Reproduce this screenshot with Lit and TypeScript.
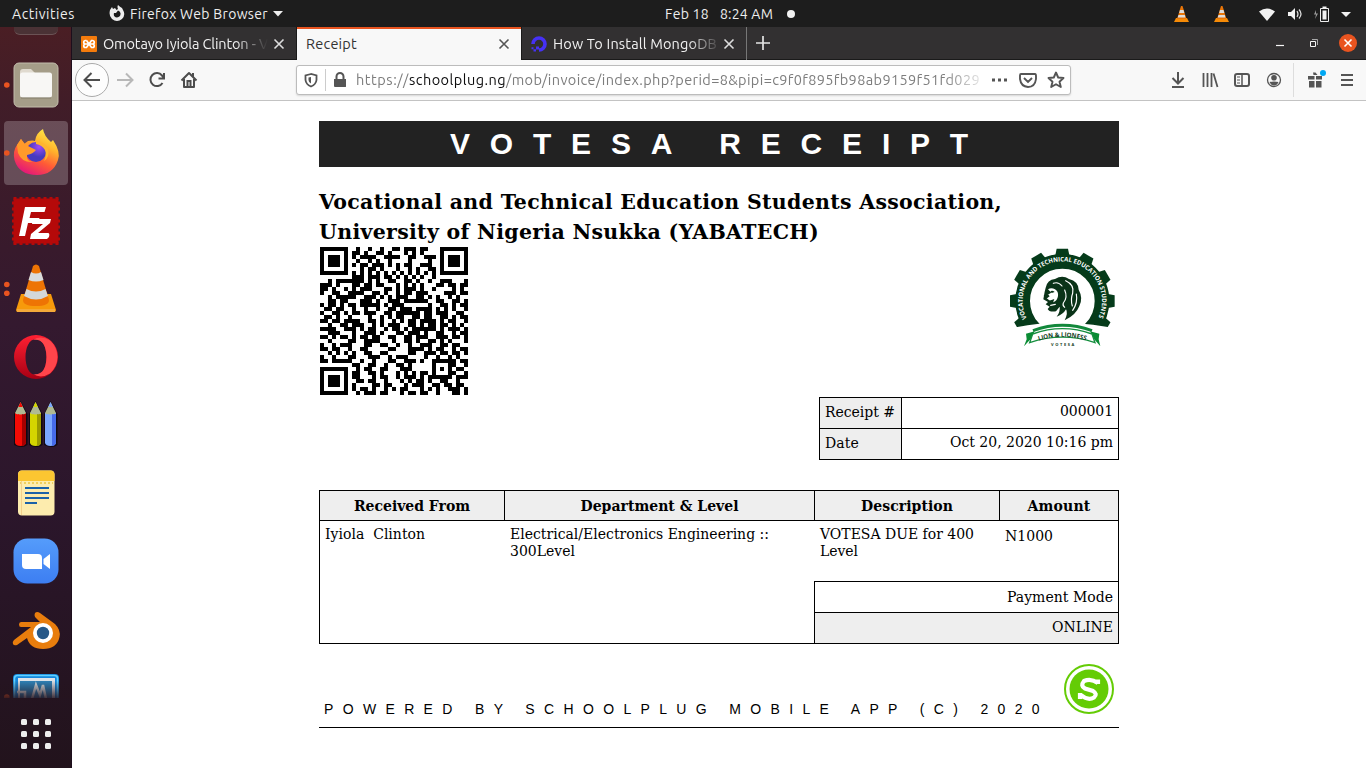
import { LitElement, html, svg, css } from "lit";
import { customElement, property } from "lit/decorators.js";

/** A single line of text tracked out (or in) so that it fills a known width. */
@customElement("fit-text")
class FitText extends LitElement {
  @property({ type: Number }) width = 0;
  static styles = css`
    :host { display: inline-block; white-space: pre; }
    span { display: inline-block; }
  `;
  render() { return html`<span><slot></slot></span>`; }
  firstUpdated() {
    const span = this.renderRoot.querySelector("span") as HTMLElement;
    const count = (this.textContent || "").length;
    const natural = span.getBoundingClientRect().width;
    if (count > 1 && this.width) {
      span.style.letterSpacing = (this.width - natural) / count + "px";
    }
  }
}

const QR_ROWS = [
  "#######..#..#..#..##.###.##...#######",
  "#.....#.##.#..##.#...#.#.#....#.....#",
  "#.###.#.#.####..####..##..###.#.###.#",
  "#.###.#..#..#.#..#....#....#..#.###.#",
  "#.###.#.#.##.###.#.#.##..###..#.###.#",
  "#.....#...#.##.#...#..#.#..##.#.....#",
  "#######.#.#.#.#.#.#.#.#.#.#.#.#######",
  "........###.###.##.#.#.#.#..#........",
  "..#.#######.#.#..##..##.#..#..###...#",
  "###.#...##.##.##...#.#.#.#...##.##.##",
  "##.#..#.#.###...##.#.###.#..#....#.#.",
  "#..##..####..##.#..#.##.###....###.##",
  "..#.#####..###.#.#.###..##.#.#..#.#..",
  "..##.##...###.#..###.######..##..##.#",
  "#.##.#.##.#####.#.###......#..##.#.##",
  ".##.##..#..#..#..##.###.####.#.#.#..#",
  "#..##.#.##.###..##.######.##.###..##.",
  ".##.#..#....#..#.#.##..##.##..##.#.##",
  "##.##.####..##.#..#.#.##.####.#.##..#",
  "..#..##.###..#.#.###..##.#.##.##.#.#.",
  "####..###.#.##..#.##.#.######.#.###.#",
  "..###...#..###.#...##.###.#..##..#.##",
  "##.#.##.#.##.##..##..##.###..###.##.#",
  "..#....##..####...#..##.#..##.#.#...#",
  "#..#.###...##..##..#..#..###..##.##..",
  "##.##..#..##.....##...####.#.##..#.##",
  "..#.#.#.#..##..##.....##..###.##.##.#",
  "#..#...##...###..#.###....#..#..#.#..",
  "##.#####..#..#...##..###.#..######.##",
  "........##..##..#..##.#.....#...##..#",
  "#######..#.##..##...###.....#.#.#.##.",
  "#.....#.##..##.#...#.#.#.##.#...##..#",
  "#.###.#.##...#.##..#.###.#.######.###",
  "#.###.#..##.##..#...#.#.##.#..##..#..",
  "#.###.#.#....##.##...#.###..##.##.##.",
  "#.....#.#.##.#..#.#.##...#.#.#..###.#",
  "#######..#.###.##...#.##.##..#...##.#",
];

const qrPath = QR_ROWS.map((row, y) =>
  [...row].map((c, x) => (c === "#" ? `M${x} ${y}h1v1h-1z` : "")).join("")
).join("");

const teeth = [-120, -90, -60, -30, 0, 30, 60, 90, 120];

const crest = svg`
<svg class="crest" viewBox="0 0 372 345" width="124" height="115">
  <defs>
    <path id="arc" d="M83 241 A119 119 0 1 1 291 241"/>
    <path id="ribbonArc" d="M116 302Q187 279 260 302"/>
    <clipPath id="cut"><path d="M0 0H372V272Q187 225 0 272Z"/></clipPath>
  </defs>
  <g clip-path="url(#cut)">
    ${teeth.map(a => svg`<path d="M166 46L170 26H204L208 46Z" fill="#053b1a" transform="rotate(${a} 187 183)"/>`)}
    <circle cx="187" cy="183" r="119" fill="none" stroke="#053b1a" stroke-width="44"/>
  </g>
  <text class="ring"><textPath href="#arc" startOffset="6" textLength="478" lengthAdjust="spacingAndGlyphs">VOCATIONAL AND TECHNICAL EDUCATION STUDENTS</textPath></text>
  <path fill="#0a3318" d="M137 143Q142 119 165 117Q187 103 207 117Q235 124 236 149Q250 174 238 198Q228 225 194 241Q205 219 198 208Q190 223 170 230Q181 216 179 200L168 214Q147 217 143 207L149 200L137 193L144 186L130 178L134 155Z"/>
  <path fill="#fff" d="M144 148Q154 141 165 148Q176 155 174 168Q172 182 160 187L148 181L139 174L143 164L154 158Z"/>
  <path fill="#0a3318" d="M131 166L144 163L149 169L138 177ZM151 154Q157 150 164 156L155 159ZM148 182L163 177L159 188Z"/>
  <path fill="none" stroke="#fff" stroke-width="3.500" stroke-linecap="round" d="M160 130Q175 124 186 138M197 122Q224 134 218 160Q211 178 217 198M194 150Q204 172 190 189Q187 198 194 202M229 162Q234 188 218 211M152 196L166 193"/>
  <path d="M72 319L92 297L104 274L78 281L80 298ZM301 319L282 297L270 274L298 281L296 298Z" fill="#0a8c34"/>
  <path d="M98 282Q187 250 276 282L285 308Q187 275 89 308Z" fill="#fff" stroke="#158e3e" stroke-width="4"/>
  <path d="M99 272Q187 240 276 272" fill="none" stroke="#12883b" stroke-width="9"/>
  <text class="ribbon"><textPath href="#ribbonArc" textLength="144" lengthAdjust="spacingAndGlyphs">LION &amp; LIONESS</textPath></text>
  <text class="votesa" x="153" y="319" textLength="70">VOTESA</text>
</svg>`;

const coneIcon = svg`
  <path d="M21 40H51L56 56Q56 58 54 58H18Q16 58 16 56Z" fill="#f79a0b"/>
  <path d="M17 55H55V58H17Z" fill="#f4a93a"/>
  <path d="M33 12Q36 9 39 12L49 46Q49 52 36 52Q23 52 23 46Z" fill="#ee7404"/>
  <path d="M31 18Q36 21 41 18L43.500 26Q36 29 28.500 26Z" fill="#d9dcdd"/>
  <path d="M26.500 35Q36 40 45.500 35L48 42Q36 49 24 42Z" fill="#d3d7d9"/>`;

const dock = [
  { dots: 1, art: svg`
    <rect x="14" y="12" width="44" height="44" rx="5" fill="#a59d88" stroke="#c2bcab"/>
    <path d="M20 21Q20 18 23 18H31L35 22H40V30H20Z" fill="#e0dacf"/>
    <rect x="20" y="21.500" width="32" height="25" rx="2.500" fill="#f8f7f5"/><path d="M21 47H51" stroke="#6f6858" opacity=".6"/>` },
  { dots: 1, active: true, art: svg`
    <defs>
      <linearGradient id="fox" x1=".8" y1="0" x2=".3" y2="1"><stop offset="0" stop-color="#fff14a"/><stop offset=".35" stop-color="#ffb22c"/><stop offset=".65" stop-color="#ff5a36"/><stop offset="1" stop-color="#e3157c"/></linearGradient>
      <radialGradient id="globe" cx=".65" cy=".25"><stop offset="0" stop-color="#a04cf5"/><stop offset="1" stop-color="#463ac0"/></radialGradient>
    </defs>
    <path d="M17 26L21 20L24 25L28 22Q33 21 35 22Q36 14 43 10Q44 17 51 23L53 21Q61 33 58 41Q53 56 37 56Q19 56 14.500 41Q12.500 32 17 26Z" fill="url(#fox)"/>
    <circle cx="36" cy="33" r="10" fill="url(#globe)"/>
    <path d="M17 26L21 20L25 25L29 23L28 27L36 31Q33 35 27 36Q26 42 33 43Q22 44 18 34Z" fill="#ff9a2a"/>
    <path d="M36 22Q44 22 48 30Q50 38 44 42Q47 36 45 31Q42 26 36 25Z" fill="#ffb52e"/>` },
  { art: svg`
    <rect x="13.500" y="11.500" width="45" height="45" fill="#b50909" stroke="#b50909" stroke-width="3" stroke-dasharray="3 3"/>
    <path d="M25 20H46L44.500 25H31L29.500 31H39.500L38 36H28L25 49H19Z" fill="#fff"/>
    <path d="M33 32H51L50 36L38 46H48Q50 46 49 50L47 52H30L31 47L43 37H32Z" fill="#fff"/>` },
  { dots: 2, art: svg`<g transform="translate(0 -1)">${coneIcon}</g>` },
  { art: svg`
    <defs><linearGradient id="op" x2="0" y2="1"><stop stop-color="#ff2032"/><stop offset="1" stop-color="#a60014"/></linearGradient></defs>
    <path fill-rule="evenodd" fill="url(#op)" d="M36 12A22 22 0 1 0 36 56A22 22 0 1 0 36 12ZM36 16C43 16 46.500 25 46.500 34S43 52 36 52S25.500 43 25.500 34S29 16 36 16Z"/>
    <path d="M33 17Q41 12 50 17.500A22 22 0 0 1 50 50.500Q41 56 33 51Q46 53 46.500 34Q46 15 33 17Z" fill="#ff454b"/>` },
  { art: svg`${[["#f40b05", "#a50000", 15], ["#d5d500", "#9b9b00", 30], ["#7ba7ff", "#466bea", 45]].map(([a, b, x]) => svg`
    <g transform="translate(${x} 11)"><path d="M-1 12L5.500 -1L12.500 12V43Q7 47 -1 43Z" fill="#100812"/>
    <path d="M0 11H11V41Q10 44 5.500 44T0 41Z" fill="${a}"/><path d="M7 12H11V41Q10 44 7 44Z" fill="${b}"/>
    <path d="M0 11L5.500 0L11 11Q9 13 7.500 12Q5.500 13 3.500 12Q2 13 0 11Z" fill="#b0ba92"/><path d="M3.300 5L5.500 0L7.800 5Z" fill="${a}"/></g>`)}` },
  { art: svg`
    <rect x="18" y="11.500" width="36.500" height="45" rx="4" fill="#fdecae"/>
    <path d="M18 22V16Q18 11.500 22 11.500H50.500Q54.500 11.500 54.500 16V22Z" fill="#fcc631"/>
    <path d="M20 24H53" stroke="#f0cf5c" stroke-width="2" stroke-dasharray="2 2"/><path d="M21.500 22V56" stroke="#f3cf8c"/>
    <path d="M25 29H49M25 34H49M25 39H49M25 44H37" stroke="#1c62a8" stroke-width="2"/>` },
  { art: svg`
    <defs><linearGradient id="zm" x2="0" y2="1"><stop stop-color="#559cfb"/><stop offset="1" stop-color="#3d7ef2"/></linearGradient></defs>
    <rect x="13.500" y="11.500" width="45" height="45" rx="14" fill="url(#zm)"/>
    <path d="M22 27H38Q42 27 42 31V42H26Q22 42 22 38Z" fill="#fff"/><path d="M43.500 32L50 27V42L43.500 37Z" fill="#fff"/>` },
  { art: svg`<g transform="translate(0 1)">
    <path d="M35 17Q37 15 40 17L55 28Q61 34 59.500 41Q57 53 43 53Q30 53 27 42L17 49Q14 50 13 48Q12 46 14 44L31 31H21Q19 31 19 28.500Q19 26 21 26H40L35 21Q34 19 35 17Z" fill="#e87d0d"/>
    <circle cx="43" cy="37" r="10" fill="#fff"/><circle cx="43" cy="37" r="6.200" fill="#265787"/></g>` },
];

@customElement("app-root")
class AppRoot extends LitElement {
  static styles = css`
    * { box-sizing: border-box; }
    :host { display: block; width: 1366px; height: 768px; overflow: hidden; background: #fff; }
    svg { display: block; flex: none; }
    .screen { display: flex; flex-direction: column; height: 768px; font: 14.5px/20px Ubuntu, "Noto Sans", sans-serif; }

    .panel { height: 27px; flex: none; background: #1d1d1d; color: #eee; display: flex; align-items: center; font-size: 14px; }
    .panel-left { display: flex; align-items: center; padding-left: 12px; width: 665px; }
    .fx-mini { margin: 0 5px 0 34px; }
    .arrow { margin-left: 5px; }
    .clock { display: flex; align-items: center; gap: 11px; }
    .clock svg { margin-left: 2px; }
    .tray { margin-left: auto; display: flex; align-items: center; padding-right: 15px; }
    .tray svg:last-child { margin-left: 2px; }

    .work { display: flex; flex: 1; min-height: 0; }
    .dock { width: 72px; flex: none; background: linear-gradient(#4a1e24 0, #411d28 10%, #381a2c 30%, #34192f 40%, #2b162b 65%, #22131c 100%); display: flex; flex-direction: column; border-right: 1px solid #1d0e1c; }
    .stub { height: 24px; padding-left: 14px; }
    .stub i { display: block; width: 44px; height: 8px; border-radius: 0 0 6px 6px; background: #4a3235; border-bottom: 1px solid #6b5355; }
    .slot { height: 68px; flex: none; }
    .partial { height: 35px; flex: none; overflow: hidden; }
    .apps { padding-top: 21px; display: grid; grid-template-columns: repeat(3, 6px); gap: 6px; padding-left: 21px; }
    .apps i { width: 6px; height: 6px; border-radius: 1.500px; background: #eee; }

    .browser { flex: 1; min-width: 0; display: flex; flex-direction: column; }
    .tabs { height: 33px; flex: none; background: #323031; border-bottom: 1px solid #1a1a1a; display: flex; color: #f1f1f1; }
    .tab { display: flex; align-items: center; height: 33px; }
    .tab.one { width: 225px; padding-left: 9px; border-right: 1px solid #1a1a1a; }
    .tab.two { width: 224px; padding: 0 11px 2px 9px; background: #f8f8f8; color: #333; border-top: 2px solid #e95420; justify-content: space-between; }
    .tab.three { width: 226px; padding-left: 9px; border-left: 1px solid #1a1a1a; border-right: 1px solid #777; }
    .label { margin-left: 6px; width: 165px; overflow: hidden; white-space: nowrap; -webkit-mask-image: linear-gradient(90deg, #000 80%, transparent 100%); }
    .label.b { -webkit-mask-image: linear-gradient(90deg, #000 82%, transparent 102%); }
    .cross { margin-left: 5px; }
    .plus { margin: 9px 0 0 9px; }
    .controls { margin-left: auto; display: flex; align-items: center; padding-right: 8px; }

    .bar { height: 41px; flex: none; background: #f8f8f8; border-bottom: 1px solid #c3c3c3; display: flex; align-items: center; color: #555; }
    .nav { width: 224px; display: flex; }
    .url { width: 775px; height: 30px; background: #fff; border: 1px solid #bcbcbc; border-radius: 3px; display: flex; align-items: center; box-shadow: 0 1px 2px #0002; }
    .address { width: 626px; margin-left: 8px; padding-bottom: 0; white-space: nowrap; color: #7d7d7d; -webkit-mask-image: linear-gradient(90deg, #000 94%, transparent 101%); }
    .address b { font-weight: 400; color: #0c0c0d; }
    .tools { margin-left: auto; }

    .page { flex: 1; background: #fff; color: #000; padding: 20px 0 0 247px; font: 14px/17px "DejaVu Serif", serif; }
    .sheet { width: 800px; }
    .banner { height: 46px; background: #222; color: #fff; font: bold 30px/46px "Liberation Sans", sans-serif; padding-left: 131px; }
    .org { margin: 20px 0 0; font: bold 20.500px/30px "DejaVu Serif", serif; height: 60px; }
    .marks { display: flex; justify-content: space-between; height: 150px; }
    .qr { margin: 0 0 0 1px; }
    .crest { margin: -7px -5px 0 0; }
    .ring { font: bold 19px "Open Sans", sans-serif; fill: #fff; }
    .ribbon { font: bold 19px "Open Sans", sans-serif; fill: #143d22; }
    .votesa { font: bold 12px "Open Sans", sans-serif; fill: #143d22; }

    .meta { width: 300px; height: 63px; margin-left: 500px; border: 1px solid #000; display: grid; grid-template-columns: 82px 1fr; grid-template-rows: 31px 30px; }
    .meta div { padding: 5px; }
    .meta .key { background: #eee; border-right: 1px solid #000; padding-top: 6px; }
    .val { text-align: right; }
    .first { border-bottom: 1px solid #000; }

    .items { margin-top: 30px; border: 1px solid #000; height: 154px; display: grid; grid-template-columns: 185px 310px 185px 118px; grid-template-rows: 30px 60px 31px 31px; }
    .head { background: #eee; border-bottom: 1px solid #000; border-right: 1px solid #000; font-weight: bold; text-align: center; padding-top: 7px; }
    .head:nth-child(4) { border-right: 0; }
    .cell { padding: 5px; }
    .amount { padding-top: 7px; }
    .total { grid-column: 3 / 5; margin-left: -1px; border: solid #000; border-width: 1px 0 0 1px; text-align: right; padding: 7px 5px 0; }
    .shade { background: #eee; padding-top: 6px; }

    .foot { height: 84px; border-bottom: 1px solid #000; display: flex; padding: 20px 5px 0; justify-content: space-between; font: 14px/17px "Liberation Sans", sans-serif; }
    .foot fit-text { margin-top: 37px; }
  `;

  private cross(c: string) {
    return html`<svg width="12" height="12" viewBox="0 0 12 12" fill="none" stroke=${c} stroke-width="1.600"><path d="M1.500 1.500l9 9M10.500 1.500l-9 9"/></svg>`;
  }
  private smallCone() {
    return html`<svg width="40" height="18" viewBox="0 0 40 18"><path d="M3 13H14L16 17H1Z" fill="#f58a07"/><path d="M8 1h1.500l4 13H4Z" fill="#e87508"/><path d="M7 5h3.500l.8 3H6.200ZM5.500 10h6.300l.6 2.500H4.700Z" fill="#ddd"/></svg>`;
  }

  render() {
    return html`<div class="screen">
      <div class="panel">
        <div class="panel-left">
          <fit-text width="63">Activities</fit-text>
          <svg class="fx-mini" width="16" height="17" viewBox="0 0 16 17"><path fill="#eee" fill-rule="evenodd" d="M1 5L3 2L4 4L6 3L7.500 5L9 4Q8 2 9 0Q11 2 13 3L14 5Q17 10 13 14Q8 18 3 14Q-.5 11 1 5ZM5 8Q4 12 8 12.500Q12 12 11.500 8Q11 6 9 5.500L7 8Z"/></svg>
          <fit-text width="138">Firefox Web Browser</fit-text>
          <svg class="arrow" width="10" height="6"><path d="M0 0H10L5 5.500Z" fill="#eee"/></svg>
        </div>
        <div class="clock">
          <fit-text width="44">Feb 18</fit-text><fit-text width="53">8:24 AM</fit-text>
          <svg width="10" height="10"><circle cx="5" cy="5" r="4" fill="#f2f2f2"/></svg>
        </div>
        <div class="tray">
          ${this.smallCone()}${this.smallCone()}
          <svg width="96" height="18" viewBox="0 0 96 18" fill="#f2f2f2">
            <path d="M4 6.500Q12 .5 20 6.500L12 16Z"/>
            <path d="M33 7H36L40 3V15L36 11H33Z"/><path d="M42 6q2 3 0 6M44 4.500q4 4.500 0 9" fill="none" stroke="#ddd" stroke-width="1.200"/>
            <path d="M61 5L59 9.500H61L60 14L63 8.500H61Z" opacity=".6"/><path d="M65.500 3.500H73.500V16.500H65.500Z" fill="none" stroke="#eee"/><path d="M67.500 1.500H71.500V3H67.500ZM67.500 5.500H71.500V14.500H67.500Z"/>
            <path d="M86 7H96L91 12Z"/>
          </svg>
        </div>
      </div>
      <div class="work">
        <div class="dock">
          <div class="stub"><i></i></div>
          ${dock.map(d => html`<svg class="slot" width="71" height="68" viewBox="0 0 71 68">
            ${d.active ? svg`<rect x="4" y="2" width="64" height="64" rx="4" fill="#fff" opacity=".22"/>` : ""}
            ${d.dots === 1 ? svg`<circle cx="6.800" cy="34" r="2.800" fill="#e95420"/>` : ""}
            ${d.dots === 2 ? svg`<circle cx="6.800" cy="29.500" r="2.800" fill="#e95420"/><circle cx="6.800" cy="38.300" r="2.800" fill="#e95420"/>` : ""}
            ${d.art}</svg>`)}
          <svg class="partial" width="71" height="35" viewBox="0 0 71 35">
            <defs><linearGradient id="fade" x2="0" y2="1"><stop offset=".5" stop-color="#25141f" stop-opacity="0"/><stop offset="1" stop-color="#25141f" stop-opacity=".85"/></linearGradient></defs>
            <rect x="13" y="11" width="46" height="40" rx="4" fill="#1487db"/><rect x="14.500" y="12.500" width="43" height="38" rx="3" fill="none" stroke="#5fd1ff" stroke-width="1.500"/>
            <path d="M18 15H55V40H18Z" fill="#dbe2e8"/><path d="M20 18H52V40H20Z" fill="#2e82b7"/>
            <path d="M17 29H25V35M32 36L36 22L40 32L43 22L46 36" fill="none" stroke="#d5dde0" stroke-width="2.500"/>
            <circle cx="6.800" cy="34" r="2.800" fill="#e95420"/><rect width="71" height="35" fill="url(#fade)"/>
          </svg>
          <div class="apps">${Array.from({ length: 9 }, () => html`<i></i>`)}</div>
        </div>
        <div class="browser">
          <div class="tabs">
            <div class="tab one">
              <svg width="16" height="16" viewBox="0 0 16 16"><rect width="16" height="16" rx="1" fill="#f47b0c"/><path d="M5.500 4.500H4.500A1.700 1.700 0 0 0 4.500 8H11.500A1.700 1.700 0 0 0 11.500 4.500H10.500L5.500 11.500H4.500A1.700 1.700 0 0 1 4.500 8M11.500 8A1.700 1.700 0 0 1 11.500 11.500H10.500L5.500 4.500" fill="none" stroke="#fff" stroke-width="1.700"/></svg>
              <div class="label"><fit-text width="165">Omotayo Iyiola Clinton - V</fit-text></div>
              <div class="cross">${this.cross("#ddd")}</div>
            </div>
            <div class="tab two"><fit-text width="51">Receipt</fit-text>${this.cross("#555")}</div>
            <div class="tab three">
              <svg width="16" height="16" viewBox="0 0 16 16"><path d="M8 14A6 6 0 1 0 2 8" fill="none" stroke="#4631f5" stroke-width="3.600"/><path d="M5 10.500H8V13.500H5ZM2.500 13.300H5V15.500H2.500ZM.5 11.300H2.500V13.300H.5Z" fill="#4631f5"/></svg>
              <div class="label b"><fit-text width="164">How To Install MongoDB</fit-text></div>
              <div class="cross">${this.cross("#ddd")}</div>
            </div>
            <svg class="plus" width="14" height="14"><path d="M7 0V14M0 7H14" stroke="#e3e3e3" stroke-width="1.700"/></svg>
            <div class="controls">
              <svg width="84" height="20" viewBox="0 0 84 20" fill="none"><path d="M2 12.500H10" stroke="#f5f5f5" stroke-width="1.200"/><path d="M36.500 8.500H41.500V13.500H36.500Z" stroke="#f5f5f5"/><path d="M38 6.500H43.500V12" stroke="#aaa"/><circle cx="74" cy="10" r="9" fill="#e95420"/><path d="M70.500 6.500l7 7M77.500 6.500l-7 7" stroke="#fff" stroke-width="1.600"/></svg>
            </div>
          </div>
          <div class="bar">
            <div class="nav">
              <svg width="140" height="40" viewBox="0 0 140 40" fill="none" stroke="#4d4d4d" stroke-width="2">
                <circle cx="20" cy="20" r="16.500" fill="#fdfdfd" stroke="#aaa" stroke-width="1"/>
                <path d="M28 20H13M19.500 13L12.500 20L19.500 27"/>
                <path d="M45 20H60M54 13.500L60.500 20L54 26.500" stroke="#b8b8b8"/>
                <path d="M90.500 23A6.500 6.500 0 1 1 90 15.500L92 18M92 13V18.500H86.500"/>
                <path d="M109.500 20.500L117 13L124.500 20.500M112 19V27H122V19" stroke-linejoin="round"/><path d="M115.500 27V21H118.500V27M121 13V17" />
              </svg>
            </div>
            <div class="url">
              <svg width="51" height="28" viewBox="0 0 51 28" fill="none">
                <path d="M14 8L8.500 9.500V14Q9 18.500 14 20.500Q19 18.500 19.500 14V9.500Z" stroke="#555" stroke-width="1.800"/><path d="M14 11V17.500Q11.500 16 11.500 14V11.500Z" fill="#555"/>
                <path d="M28.500 3V25" stroke="#ccc"/>
                <path d="M37 13H49V20.500Q49 21 48 21H38Q37 21 37 20Z" fill="#555"/><path d="M39.500 13V10.500A3.500 3.500 0 0 1 46.500 10.500V13" stroke="#555" stroke-width="2"/>
              </svg>
              <div class="address"><fit-text width="53">https://</fit-text><b><fit-text width="97">schoolplug.ng</fit-text></b><fit-text width="474">/mob/invoice/index.php?perid=8&amp;pipi=c9f0f895fb98ab9159f51fd029</fit-text></div>
              <svg width="84" height="28" viewBox="0 0 84 28" fill="none" stroke="#555" stroke-width="1.900">
                <path d="M10 14h3M16 14h3M22 14h3" stroke-width="3.200"/>
                <path d="M39 8H53Q54 8 54 10V13Q53 21 46 21Q39 20.500 38 13V9.500Q38 8 39 8ZM42 12L46 16L50 12"/>
                <path d="M74 6.500L76.200 11.500L81.500 12L77.500 15.700L78.800 21L74 18.200L69.200 21L70.500 15.700L66.500 12L71.800 11.500Z" stroke-linejoin="round"/>
              </svg>
            </div>
            <svg class="tools" width="206" height="40" viewBox="0 0 206 40" fill="none" stroke="#555" stroke-width="2">
              <path d="M18 12V23M12.500 18L18 23.500L23.500 18M12 27H24"/>
              <path d="M43.500 13V27M47.500 13V27M51.500 13V27M53.500 13.500L57.500 27" stroke-width="1.800"/>
              <rect x="75" y="14" width="14" height="12" rx="2"/><path d="M82 14V26" stroke-width="1.500"/><path d="M77 17H80M77 20H80M77 23H80" stroke-width="1"/>
              <circle cx="114" cy="20" r="6.500" stroke-width="1.300"/><circle cx="114" cy="17.800" r="2.800" fill="#555" stroke="none"/><path d="M109.500 22Q114 21 118.500 22Q117 25.500 114 25.500Q111 25.500 109.500 22Z" fill="#555" stroke="none"/>
              <path d="M133.500 3V37" stroke="#ddd" stroke-width="1"/>
              <path d="M148 16H154.500V19.500H148ZM156 16H162V19.500H156ZM149 21H154.500V27.500H149ZM156 21H161.500V27.500H156ZM153 12.500h2.500l2 2.500h-4Z" fill="#555" stroke="none"/><circle cx="163" cy="13" r="3" fill="#00a8f3" stroke="none"/>
              <path d="M181 15H193M181 20H193M181 25H193"/>
            </svg>
          </div>
          <div class="page"><div class="sheet">
            <div class="banner"><fit-text width="538">VOTESA RECEIPT</fit-text></div>
            <div class="org"><fit-text width="683">Vocational and Technical Education Students Association,</fit-text><fit-text width="500">University of Nigeria Nsukka (YABATECH)</fit-text></div>
            <div class="marks">
              <svg class="qr" width="148" height="148" viewBox="0 0 37 37" shape-rendering="crispEdges"><path d="${qrPath}"/></svg>
              ${crest}
            </div>
            <div class="meta">
              <div class="key first"><fit-text width="70">Receipt #</fit-text></div><div class="val first"><fit-text width="53">000001</fit-text></div>
              <div class="key"><fit-text width="34">Date</fit-text></div><div class="val"><fit-text width="163">Oct 20, 2020 10:16 pm</fit-text></div>
            </div>
            <div class="items">
              <div class="head"><fit-text width="116">Received From</fit-text></div>
              <div class="head"><fit-text width="158">Department &amp; Level</fit-text></div>
              <div class="head"><fit-text width="92">Description</fit-text></div>
              <div class="head"><fit-text width="63">Amount</fit-text></div>
              <div class="cell"><fit-text width="100">Iyiola  Clinton</fit-text></div>
              <div class="cell"><fit-text width="259">Electrical/Electronics Engineering ::</fit-text><fit-text width="65">300Level</fit-text></div>
              <div class="cell"><fit-text width="154">VOTESA DUE for 400</fit-text><br><fit-text width="38">Level</fit-text></div>
              <div class="cell amount"><fit-text width="48">N1000</fit-text></div>
              <div class="total"><fit-text width="106">Payment Mode</fit-text></div>
              <div class="total shade"><fit-text width="61">ONLINE</fit-text></div>
            </div>
            <div class="foot">
              <fit-text width="725">POWERED BY SCHOOLPLUG MOBILE APP (C) 2020</fit-text>
              <svg width="50" height="50" viewBox="0 0 50 50"><circle cx="25" cy="25" r="24" fill="#fff" stroke="#64cc05" stroke-width="2"/><circle cx="25" cy="25" r="19.500" fill="#64cc05"/><path d="M34 20V15.500M34 19Q27 14 20 17Q16 22 21 24.500L29 27Q34 30 30 33.500Q24 37 17 31M16 29V35" fill="none" stroke="#fff" stroke-width="4.200"/></svg>
            </div>
          </div></div>
        </div>
      </div>
    </div>`;
  }
}
